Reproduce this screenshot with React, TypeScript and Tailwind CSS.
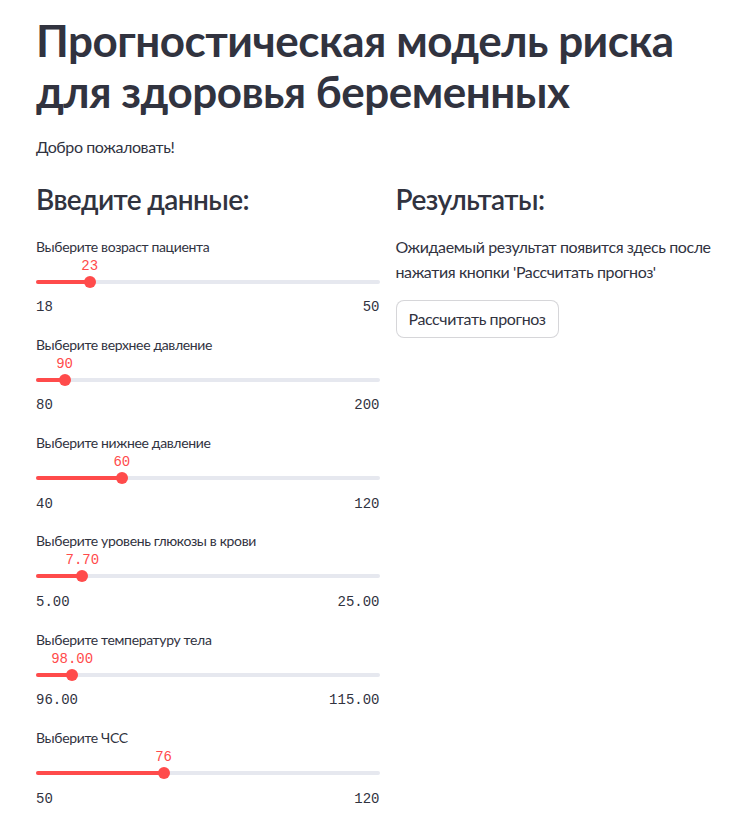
import React from "react";

type SliderProps = {
  label: string;
  min: number;
  max: number;
  value: number;
  decimals?: number;
};

const fmt = (n: number, decimals: number) => n.toFixed(decimals);

function Slider({ label, min, max, value, decimals = 0 }: SliderProps) {
  const pct = ((value - min) / (max - min)) * 100;
  return (
    <div className="pb-[14.3px]">
      <div className="h-[22px] pt-[1px] text-[14px] leading-[22px] tracking-[-0.35px] text-[#31333f]">{label}</div>
      <div className="relative h-[16px] font-['Liberation_Mono',monospace] text-[14px] leading-[16px] text-[#ff4b4b]">
        <span className="absolute top-[1px] -translate-x-1/2 whitespace-nowrap" style={{ left: `${pct}%` }}>
          {fmt(value, decimals)}
        </span>
      </div>
      <div className="relative flex h-[18px] items-center">
        <div className="h-[4px] w-full rounded-full bg-[#e6e8ef]" />
        <div className="absolute left-0 h-[4px] rounded-l-full bg-[#ff4b4b]" style={{ width: `${pct}%` }} />
        <div
          className="absolute h-[12px] w-[12px] -translate-x-1/2 rounded-full bg-[#ff4b4b]"
          style={{ left: `${pct}%` }}
        />
      </div>
      <div className="flex h-[28px] items-center justify-between pt-[6px] font-['Liberation_Mono',monospace] text-[14px] text-[#31333f]">
        <span>{fmt(min, decimals)}</span>
        <span>{fmt(max, decimals)}</span>
      </div>
    </div>
  );
}

export default function App() {
  return (
    <div className="min-h-screen bg-white font-['Lato','Roboto',sans-serif] text-[#31333f]">
      <div className="pl-[36px] pr-[7px] pt-[15px]">
        <h1 className="text-[44px] font-bold leading-[51px] tracking-[-0.5px]">
          Прогностическая модель риска для здоровья беременных
        </h1>
        <p className="mt-[17px] text-[16px] leading-[25.6px] tracking-[-0.4px]">Добро пожаловать!</p>

        <div className="mt-[22px] grid grid-cols-2 gap-[16px]">
          <div>
            <h3 className="text-[28px] font-semibold leading-[34px] tracking-[-0.6px]">Введите данные:</h3>
            <div className="mt-[19px]">
              <Slider label="Выберите возраст пациента" min={18} max={50} value={23} />
              <Slider label="Выберите верхнее давление" min={80} max={200} value={90} />
              <Slider label="Выберите нижнее давление" min={40} max={120} value={60} />
              <Slider label="Выберите уровень глюкозы в крови" min={5} max={25} value={7.7} decimals={2} />
              <Slider label="Выберите температуру тела" min={96} max={115} value={98} decimals={2} />
              <Slider label="Выберите ЧСС" min={50} max={120} value={76} />
            </div>
          </div>
          <div>
            <h3 className="text-[28px] font-semibold leading-[34px] tracking-[-0.5px]">Результаты:</h3>
            <p className="mt-[18px] text-[16px] leading-[25.6px] tracking-[-0.4px]">
              Ожидаемый результат появится здесь после нажатия кнопки 'Рассчитать прогноз'
            </p>
            <button className="mt-[15px] h-[38px] rounded-[8px] border border-[#31333f]/20 bg-white px-[12px] text-[16px] tracking-[-0.4px] text-[#31333f]">
              Рассчитать прогноз
            </button>
          </div>
        </div>
      </div>
    </div>
  );
}
